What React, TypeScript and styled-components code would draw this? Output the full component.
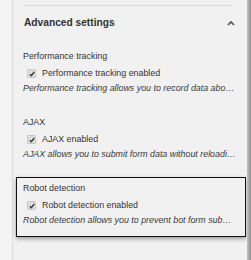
import React from 'react'
import styled, { createGlobalStyle } from 'styled-components'

const GlobalStyle = createGlobalStyle`
  html, body {
    margin: 0;
    padding: 0;
    background: #f1f1f1;
    overflow: hidden;
  }
  body {
    font-family: "Liberation Sans", Arial, sans-serif;
    color: #333;
  }
`

const Page = styled.div`
  display: flex;
  height: 260px;
  width: 251px;
`

const Gutter = styled.div`
  width: 12px;
  flex: none;
  border-right: 1px solid #dcdcdc;
  background: #f3f3f3;
`

const Panel = styled.div`
  flex: 1;
  min-width: 0;
  display: flex;
  flex-direction: column;
  padding-top: 5px;
`

const EdgeShadow = styled.div`
  width: 4px;
  flex: none;
  background: linear-gradient(to right, #c4c4c4, #8e8e8e);
`

const Header = styled.div`
  margin: 0 14px 0 11px;
  border-top: 1px solid #dcdcdc;
  padding-top: 11px;
  display: flex;
  align-items: center;
  justify-content: space-between;
`

const HeaderTitle = styled.div`
  font-size: 10.2px;
  line-height: 12px;
  font-weight: bold;
  color: #333;
`

const Chevron = styled.svg`
  width: 8px;
  height: 6px;
  margin-right: -2px;
`

const Groups = styled.div`
  display: flex;
  flex-direction: column;
  gap: 6px;
  margin: 16px 1px 0 3px;
`

const Group = styled.div<{ $active?: boolean }>`
  border: 1px solid ${(p) => (p.$active ? '#111' : 'transparent')};
  box-shadow: ${(p) => (p.$active ? '0 2px 4px rgba(0, 0, 0, 0.35)' : 'none')};
  padding: 5px 4px 10px 6px;
  display: flex;
  flex-direction: column;
  font-size: 8.87px;
  line-height: 11px;
`

const GroupTitle = styled.div`
  color: #333;
`

const CheckRow = styled.label`
  display: flex;
  align-items: center;
  gap: 6px;
  margin-top: 6px;
  padding-left: 4px;
  color: #333;
`

const Box = styled.span`
  width: 7px;
  height: 7px;
  flex: none;
  border: 1px solid #c8c8c8;
  border-radius: 1px;
  background: #dedede;
  display: flex;
  align-items: center;
  justify-content: center;
`

const Description = styled.div`
  margin-top: 4px;
  font-style: italic;
  color: #3a3a3a;
  white-space: nowrap;
`

type Setting = {
  title: string
  label: string
  description: string
  active?: boolean
}

const settings: Setting[] = [
  {
    title: 'Performance tracking',
    label: 'Performance tracking enabled',
    description: 'Performance tracking allows you to record data abo…',
  },
  {
    title: 'AJAX',
    label: 'AJAX enabled',
    description: 'AJAX allows you to submit form data without reloadi…',
  },
  {
    title: 'Robot detection',
    label: 'Robot detection enabled',
    description: 'Robot detection allows you to prevent bot form sub…',
    active: true,
  },
]

const Check = () => (
  <Box>
    <svg width="6" height="6" viewBox="0 0 6 6">
      <polyline points="0.8,3.2 2.3,4.8 5.2,1" fill="none" stroke="#333" strokeWidth="1.3" />
    </svg>
  </Box>
)

const App = () => {
  return (
    <>
      <GlobalStyle />
      <Page>
        <Gutter />
        <Panel>
          <Header>
            <HeaderTitle>Advanced settings</HeaderTitle>
            <Chevron viewBox="0 0 8 6">
              <polyline points="1,5 4,2 7,5" fill="none" stroke="#555" strokeWidth="1.7" />
            </Chevron>
          </Header>
          <Groups>
            {settings.map((s) => (
              <Group key={s.title} $active={s.active}>
                <GroupTitle>{s.title}</GroupTitle>
                <CheckRow>
                  <Check />
                  {s.label}
                </CheckRow>
                <Description>{s.description}</Description>
              </Group>
            ))}
          </Groups>
        </Panel>
        <EdgeShadow />
      </Page>
    </>
  )
}

export default App
